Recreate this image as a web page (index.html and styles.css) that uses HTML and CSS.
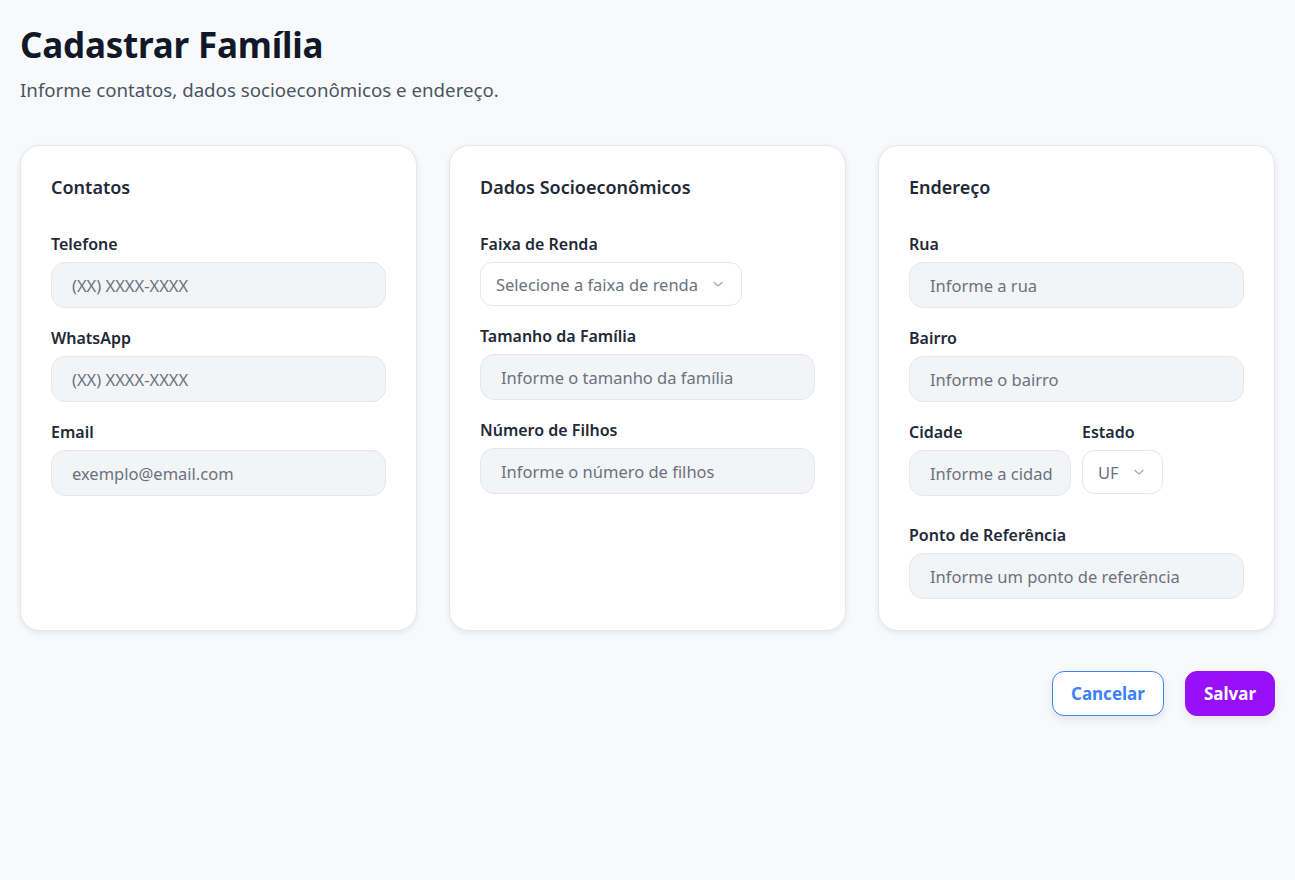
FILE: index.html
```html
<!DOCTYPE html>
<html lang="pt-BR">
<head>
<meta charset="utf-8">
<title>Cadastrar Família</title>
<link rel="stylesheet" href="styles.css">
</head>
<body>
<main class="page">
  <header class="page-header">
    <h1 class="title">Cadastrar Família</h1>
    <p class="subtitle">Informe contatos, dados socioeconômicos e endereço.</p>
  </header>

  <section class="cards">
    <div class="card">
      <h2 class="card-title">Contatos</h2>
      <div class="field">
        <label class="label">Telefone</label>
        <div class="input"><span class="ph">(XX) XXXX-XXXX</span></div>
      </div>
      <div class="field">
        <label class="label">WhatsApp</label>
        <div class="input"><span class="ph">(XX) XXXX-XXXX</span></div>
      </div>
      <div class="field">
        <label class="label">Email</label>
        <div class="input"><span class="ph">exemplo@email.com</span></div>
      </div>
    </div>

    <div class="card">
      <h2 class="card-title">Dados Socioeconômicos</h2>
      <div class="field">
        <label class="label">Faixa de Renda</label>
        <div class="select select-renda"><span class="ph">Selecione a faixa de renda</span>
          <svg class="chev" width="12" height="12" viewBox="0 0 12 12"><path d="M2 4.5 6 8l4-3.5" fill="none" stroke="#a1a7b0" stroke-width="1.2" stroke-linecap="round" stroke-linejoin="round"/></svg>
        </div>
      </div>
      <div class="field">
        <label class="label">Tamanho da Família</label>
        <div class="input"><span class="ph">Informe o tamanho da família</span></div>
      </div>
      <div class="field">
        <label class="label">Número de Filhos</label>
        <div class="input"><span class="ph">Informe o número de filhos</span></div>
      </div>
    </div>

    <div class="card">
      <h2 class="card-title">Endereço</h2>
      <div class="field">
        <label class="label">Rua</label>
        <div class="input"><span class="ph">Informe a rua</span></div>
      </div>
      <div class="field">
        <label class="label">Bairro</label>
        <div class="input"><span class="ph">Informe o bairro</span></div>
      </div>
      <div class="row">
        <div class="field field-cidade">
          <label class="label">Cidade</label>
          <div class="input"><span class="ph">Informe a cidad</span></div>
        </div>
        <div class="field">
          <label class="label">Estado</label>
          <div class="select select-uf"><span class="ph">UF</span>
            <svg class="chev" width="12" height="12" viewBox="0 0 12 12"><path d="M2 4.5 6 8l4-3.5" fill="none" stroke="#a1a7b0" stroke-width="1.2" stroke-linecap="round" stroke-linejoin="round"/></svg>
          </div>
        </div>
      </div>
      <div class="field field-ref">
        <label class="label">Ponto de Referência</label>
        <div class="input"><span class="ph">Informe um ponto de referência</span></div>
      </div>
    </div>
  </section>

  <div class="actions">
    <button class="btn btn-cancel">Cancelar</button>
    <button class="btn btn-save">Salvar</button>
  </div>
</main>
</body>
</html>
```

FILE: styles.css
```css
* { box-sizing: border-box; }
html, body { margin: 0; padding: 0; }
body {
  background: #f8f9fb;
  font-family: "Noto Sans", "Open Sans", sans-serif;
  color: #111827;
}
.page { padding: 20px 20px; }
.page-header { margin-bottom: 43px; }
.title {
  margin: 0;
  font-size: 35px;
  line-height: 50px;
  font-weight: 700;
  color: #111827;
  letter-spacing: -0.2px;
}
.subtitle {
  margin: 8px 0 0;
  font-size: 18.7px;
  line-height: 24px;
  color: #4b5563;
}
.cards {
  display: grid;
  grid-template-columns: repeat(3, 1fr);
  gap: 32px;
  margin-top: 0;
}
.card {
  background: #fff;
  border: 1px solid #e5e7eb;
  border-radius: 20px;
  box-shadow: 0 2px 6px rgba(0,0,0,0.08);
  padding: 28px 30px 30px;
  min-height: 486px;
}
.card-title {
  margin: 0 0 33px;
  font-size: 18px;
  line-height: 26px;
  font-weight: 600;
  color: #1f2937;
}
.field { display: flex; flex-direction: column; margin-bottom: 19px; }
.label {
  font-size: 16px;
  line-height: 22px;
  font-weight: 600;
  color: #1f2937;
  margin-bottom: 7px;
}
.input {
  height: 46px;
  background: #f3f4f6;
  border: 1px solid #e5e7eb;
  border-radius: 14px;
  padding: 0 20px;
  display: flex;
  align-items: center;
  overflow: hidden;
  white-space: nowrap;
}
.ph {
  font-size: 16.5px;
  color: #6b7280;
  white-space: nowrap;
}
.select {
  height: 44px;
  background: #fff;
  border: 1px solid #e5e7eb;
  border-radius: 12px;
  padding: 0 17px 0 15px;
  display: flex;
  align-items: center;
  justify-content: space-between;
  gap: 12px;
}
.select-renda { width: 262px; }
.select-uf { width: 81px; }
.chev { flex: none; }
.row { display: flex; gap: 11px; margin-bottom: 28px; }
.row .field { margin-bottom: 0; }
.field-cidade { width: 162px; }
.field-cidade .input { padding-right: 0; }
.field-ref { margin-bottom: 0; }
.actions {
  display: flex;
  justify-content: flex-end;
  gap: 21px;
  margin-top: 40px;
}
.btn {
  height: 45px;
  border-radius: 12px;
  font-family: inherit;
  font-size: 17px;
  font-weight: 700;
  padding: 0 18px;
  cursor: pointer;
  box-shadow: 0 4px 10px rgba(0,0,0,0.08);
}
.btn-cancel {
  background: #fff;
  color: #3b82f6;
  border: 1px solid #3b82f6;
}
.btn-save {
  background: #9810fa;
  color: #fff;
  border: 1px solid #9810fa;
}
```
